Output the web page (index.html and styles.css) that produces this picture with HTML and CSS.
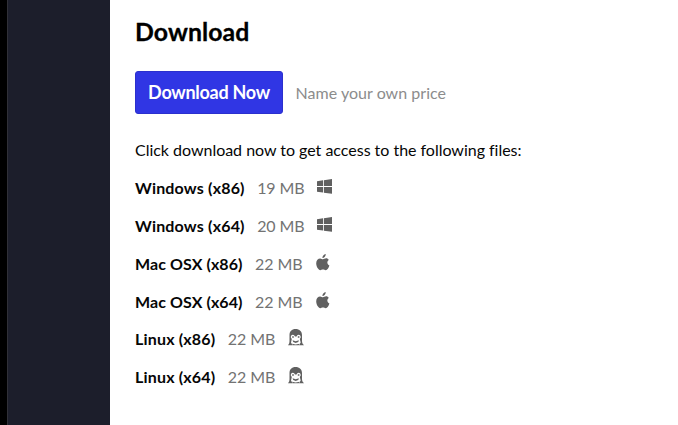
FILE: index.html
```html
<!DOCTYPE html>
<html lang="en">
<head>
<meta charset="utf-8">
<title>Download</title>
<link rel="stylesheet" href="styles.css">
</head>
<body>
<svg class="defs" aria-hidden="true">
<symbol id="windows" viewBox="0 0 16 16"><path d="M0 2.3 6.4 1.4V7.4H0ZM7.3 1.2 16 0V7.4H7.3ZM0 8.5H6.4V14.5L0 13.6ZM7.3 8.5H16V15.6L7.3 14.6Z"/></symbol>
<symbol id="apple" viewBox="0 0 14 17"><path d="M9.7 0C9.9 2.2 8.3 4.1 6.4 4.1 6.2 2.1 7.9.3 9.7 0ZM12.8 5.9C10.7 7.2 10.9 10.2 13.4 11.4 12.7 13.6 11.3 16.2 9.7 16.2 8.6 16.2 8.3 15.5 7 15.5 5.7 15.5 5.3 16.2 4.3 16.2 2.5 16.2.2 12.6.2 9.3.2 6.2 2.1 4.4 4.2 4.4 5.3 4.4 6.2 5.2 7 5.2 7.7 5.2 8.8 4.3 10.2 4.3 11.2 4.3 12.2 4.8 12.8 5.9Z"/></symbol>
<symbol id="tux" viewBox="0 0 16 17"><path fill-rule="evenodd" d="M7.5 0C3.8 0 1.5 2.4 1.5 6V12C1.5 14 1 15 0 16.2H4.5L3 13.5 3.8 10 2.8 8.5C2.8 6.5 3.5 5.7 4.8 5.7 6 5.7 6.5 6.6 7 7.6H8.5C9 6.6 9.5 5.7 10.7 5.7 12 5.7 12.7 6.5 12.7 8.5L11.8 10 12.7 13.5 11 16.2H16C14.7 15 14 14 14 12V6C14 2.4 11.5 0 7.5 0Z"/><path d="M4.2 7.2H5.8V8.8H4.2ZM9.8 7.2H11.4V8.8H9.8ZM4.6 11.2 7.7 12.2 10.9 11.2 10.3 13 7.7 14 5.2 13ZM4 14.8 7.7 15.6 11.5 14.8 10.8 16.2H4.7Z"/></symbol>
</svg>
<div class="page">
<aside class="side"></aside>
<main class="content">
<h2 class="title">Download</h2>
<div class="buy"><a class="button">Download Now</a><span class="price">Name your own price</span></div>
<p class="note">Click download now to get access to the following files:</p>
<div class="files">
<div class="file"><strong>Windows (x86)</strong><span class="size">19 MB</span><svg class="icon"><use href="#windows"/></svg></div>
<div class="file"><strong>Windows (x64)</strong><span class="size">20 MB</span><svg class="icon"><use href="#windows"/></svg></div>
<div class="file mac"><strong>Mac OSX (x86)</strong><span class="size">22 MB</span><svg class="icon apple"><use href="#apple"/></svg></div>
<div class="file mac"><strong>Mac OSX (x64)</strong><span class="size">22 MB</span><svg class="icon apple"><use href="#apple"/></svg></div>
<div class="file"><strong>Linux (x86)</strong><span class="size">22 MB</span><svg class="icon tux"><use href="#tux"/></svg></div>
<div class="file"><strong>Linux (x64)</strong><span class="size">22 MB</span><svg class="icon tux"><use href="#tux"/></svg></div>
</div>
</main>
</div>
</body>
</html>
```
FILE: styles.css
```css
* { box-sizing: border-box; }
body { margin: 0; font: 16px/24px Lato, sans-serif; color: #060606; background: #fff; }
.defs { display: none; }
.page { display: flex; height: 425px; overflow: hidden; }
.side { width: 110px; flex: none; background: linear-gradient(to right, #303038 1px, #1c1e2b 1px); border-left: 7px solid #000; background-origin: padding-box; }
.content { padding: 17px 25px 0; }
.title { margin: 0; font-size: 24.8px; line-height: 30px; font-weight: 700; letter-spacing: .1px; color: #000; -webkit-text-stroke: .3px #000; }
.buy { display: flex; align-items: center; margin-top: 24px; height: 43px; }
.button { width: 148px; height: 43px; line-height: 41px; text-align: center; background: #3036e4; border: 1px solid #2b30cd; color: #fff; border-radius: 3px; font-size: 18px; font-weight: 700; letter-spacing: -.28px; }
.price { margin-left: 12.5px; color: #8c8c8c; letter-spacing: .03px; }
.note { margin: 24px 0 0; letter-spacing: -.02px; }
.files { margin-top: 7px; }
.file { display: flex; align-items: center; height: 37.8px; }
.file strong { letter-spacing: .18px; }
.mac { padding-top: 1px; }
.mac strong { letter-spacing: .07px; }
.size { margin-left: 12.5px; color: #737373; letter-spacing: -.1px; }
.icon { width: 15px; height: 15px; margin: -3px 0 0 12.3px; fill: #606060; }
.apple { width: 14px; height: 17px; margin-left: 14px; }
.tux { width: 16px; height: 17px; margin-left: 13px; }
```
